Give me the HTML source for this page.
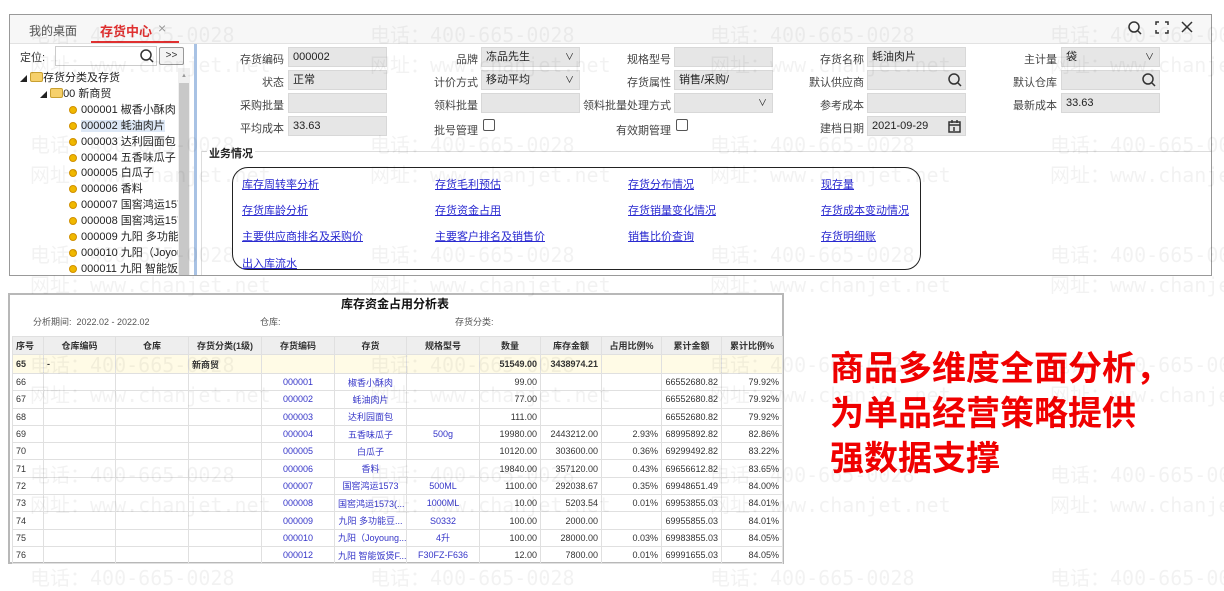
<!DOCTYPE html>
<html><head><meta charset="utf-8"><style>
*{margin:0;padding:0;box-sizing:border-box}
body{width:1224px;height:575px;background:#fff;position:relative;overflow:hidden;font-family:"Liberation Sans","Noto Sans CJK SC",sans-serif;font-size:12px;color:#333}
.a{position:absolute}
.lbl{position:absolute;text-align:right;font-size:11px;color:#444;white-space:nowrap}
.inp{position:absolute;height:20px;background:#e6e6e6;border:1px solid #d8d8d8;font-size:11px;line-height:18px;padding-left:4px;color:#222}
.lk{position:absolute;color:#2a2ad0;text-decoration:underline;font-size:11px;white-space:nowrap}
.tr{position:absolute;font-size:11px;color:#222;white-space:nowrap}
.dot{display:inline-block;width:8px;height:8px;border-radius:50%;background:#f0b800;border:1px solid #d09000;margin-right:4px;vertical-align:-1px}
table{border-collapse:collapse;font-size:9px;table-layout:fixed}
td{border:1px solid #e0e0e0;height:17.3px;padding:0 3px;white-space:nowrap;overflow:hidden;color:#333}
.b{color:#3535c8;text-align:center}
.r{text-align:right}.c{text-align:center}
.wm{position:absolute;font-family:"DejaVu Sans Mono","Noto Sans CJK SC",monospace;font-size:20px;color:rgba(0,0,0,0.05);white-space:nowrap;pointer-events:none}
.chk{position:absolute;width:12px;height:12px;border:1px solid #555;border-radius:2px;background:#fff}
</style></head><body>

<div class="a" style="left:9px;top:14px;width:1203px;height:262px;border:1px solid #999;background:#fff"></div>
<div class="a" style="left:10px;top:15px;width:1201px;height:29px;background:#f7f7f7;border-bottom:1px solid #e2e2e2"></div>
<div class="a" style="left:29px;top:22px;font-size:12px;color:#555">我的桌面</div>
<div class="a" style="left:100px;top:21px;font-size:13px;color:#e03030;font-weight:bold">存货中心</div>
<div class="a" style="left:158px;top:20px;font-size:14px;color:#999">×</div>
<div class="a" style="left:91px;top:41px;width:88px;height:2px;background:#e03030"></div>
<svg class="a" style="left:1126px;top:19px" width="80" height="18" viewBox="0 0 80 18" fill="none" stroke="#333" stroke-width="1.5">
<circle cx="8" cy="8" r="5"/><path d="M12 12l3 3"/>
<path d="M33 3h-3v3M39 3h3v3M33 14h-3v-3M39 14h3v-3"/>
<path d="M56 3l10 10M66 3L56 13"/></svg>

<div class="a" style="left:20px;top:49px;font-size:11px">定位:</div>
<div class="a" style="left:55px;top:46px;width:102px;height:20px;border:1px solid #ccc;background:#fff"></div>
<svg class="a" style="left:139px;top:48px" width="16" height="16" fill="none" stroke="#333" stroke-width="1.5"><circle cx="7" cy="7" r="5"/><path d="M11 11l3 3"/></svg>
<div class="a" style="left:159px;top:47px;width:25px;height:18px;border:1px solid #999;border-radius:2px;background:#f4f4f4;font-size:10px;text-align:center;line-height:16px">&gt;&gt;</div>
<div class="a" style="left:178px;top:68px;width:12px;height:207px;background:#f0f0f0"></div>
<div class="a" style="left:179px;top:83px;width:10px;height:192px;background:#c8c8c8"></div>
<div class="a" style="left:181px;top:73px;font-size:6px;color:#999">▲</div>
<div class="a" style="left:194px;top:44px;width:3px;height:231px;background:#a8c2e4"></div>

<div class="tr" style="left:20px;top:69px"><span style="font-size:7px">◢</span> <span style="display:inline-block;width:13px;height:10px;background:#f6d06b;border:1px solid #c9a030;border-radius:2px;vertical-align:-1px"></span>存货分类及存货</div>
<div class="tr" style="left:40px;top:85px"><span style="font-size:7px">◢</span> <span style="display:inline-block;width:13px;height:10px;background:#f6d06b;border:1px solid #c9a030;border-radius:2px;vertical-align:-1px"></span>00 新商贸</div>
<div class="tr" style="left:69px;top:101px"><span class="dot"></span>000001 椒香小酥肉</div>
<div class="tr" style="left:69px;top:117px"><span class="dot"></span><span style="background:#dde8f6">000002 蚝油肉片</span></div>
<div class="tr" style="left:69px;top:133px"><span class="dot"></span>000003 达利园面包</div>
<div class="tr" style="left:69px;top:149px"><span class="dot"></span>000004 五香味瓜子</div>
<div class="tr" style="left:69px;top:164px"><span class="dot"></span>000005 白瓜子</div>
<div class="tr" style="left:69px;top:180px"><span class="dot"></span>000006 香料</div>
<div class="tr" style="left:69px;top:196px;width:109px;overflow:hidden"><span class="dot"></span>000007 国窖鸿运1573</div>
<div class="tr" style="left:69px;top:212px;width:109px;overflow:hidden"><span class="dot"></span>000008 国窖鸿运1573</div>
<div class="tr" style="left:69px;top:228px;width:109px;overflow:hidden"><span class="dot"></span>000009 九阳 多功能豆浆</div>
<div class="tr" style="left:69px;top:244px;width:109px;overflow:hidden"><span class="dot"></span>000010 九阳（Joyoung</div>
<div class="tr" style="left:69px;top:260px;width:109px;overflow:hidden"><span class="dot"></span>000011 九阳 智能饭煲</div>

<div class="lbl" style="right:940px;top:51px">存货编码</div><div class="inp" style="left:288px;top:47px;width:99px">000002</div>
<div class="lbl" style="right:940px;top:74px">状态</div><div class="inp" style="left:288px;top:70px;width:99px">正常</div>
<div class="lbl" style="right:940px;top:97px">采购批量</div><div class="inp" style="left:288px;top:93px;width:99px"></div>
<div class="lbl" style="right:940px;top:120px">平均成本</div><div class="inp" style="left:288px;top:116px;width:99px">33.63</div>

<div class="lbl" style="right:746px;top:51px">品牌</div><div class="inp" style="left:481px;top:47px;width:99px">冻品先生<span style="position:absolute;right:5px;font-size:9px">∨</span></div>
<div class="lbl" style="right:746px;top:74px">计价方式</div><div class="inp" style="left:481px;top:70px;width:99px">移动平均<span style="position:absolute;right:5px;font-size:9px">∨</span></div>
<div class="lbl" style="right:746px;top:97px">领料批量</div><div class="inp" style="left:481px;top:93px;width:99px"></div>
<div class="lbl" style="right:746px;top:122px">批号管理</div><div class="chk" style="left:483px;top:119px"></div>

<div class="lbl" style="right:553px;top:51px">规格型号</div><div class="inp" style="left:674px;top:47px;width:99px"></div>
<div class="lbl" style="right:553px;top:74px">存货属性</div><div class="inp" style="left:674px;top:70px;width:99px">销售/采购/</div>
<div class="lbl" style="right:553px;top:97px">领料批量处理方式</div><div class="inp" style="left:674px;top:93px;width:99px"><span style="position:absolute;right:5px;font-size:9px">∨</span></div>
<div class="lbl" style="right:553px;top:122px">有效期管理</div><div class="chk" style="left:676px;top:119px"></div>

<div class="lbl" style="right:360px;top:51px">存货名称</div><div class="inp" style="left:867px;top:47px;width:99px">蚝油肉片</div>
<div class="lbl" style="right:360px;top:74px">默认供应商</div><div class="inp" style="left:867px;top:70px;width:99px"><svg style="position:absolute;right:2px;top:1px" width="16" height="16" fill="none" stroke="#333" stroke-width="1.5"><circle cx="7" cy="7" r="5"/><path d="M11 11l3 3"/></svg></div>
<div class="lbl" style="right:360px;top:97px">参考成本</div><div class="inp" style="left:867px;top:93px;width:99px"></div>
<div class="lbl" style="right:360px;top:120px">建档日期</div><div class="inp" style="left:867px;top:116px;width:99px">2021-09-29<svg style="position:absolute;right:3px;top:2px" width="14" height="14" fill="none" stroke="#333" stroke-width="1.5"><rect x="1" y="3" width="11" height="10"/><path d="M1 6h11M4 1v3M9 1v3M6 8v4"/></svg></div>

<div class="lbl" style="right:167px;top:51px">主计量</div><div class="inp" style="left:1061px;top:47px;width:99px">袋<span style="position:absolute;right:5px;font-size:9px">∨</span></div>
<div class="lbl" style="right:167px;top:74px">默认仓库</div><div class="inp" style="left:1061px;top:70px;width:99px"><svg style="position:absolute;right:2px;top:1px" width="16" height="16" fill="none" stroke="#333" stroke-width="1.5"><circle cx="7" cy="7" r="5"/><path d="M11 11l3 3"/></svg></div>
<div class="lbl" style="right:167px;top:97px">最新成本</div><div class="inp" style="left:1061px;top:93px;width:99px">33.63</div>

<div class="a" style="left:201px;top:151px;width:1010px;height:1px;background:#ddd"></div>
<div class="a" style="left:201px;top:151px;width:1px;height:124px;background:#ddd"></div>
<div class="a" style="left:207px;top:145px;background:#fff;padding:0 2px;font-size:11px;font-weight:bold;color:#222">业务情况</div>
<div class="a" style="left:232px;top:167px;width:689px;height:103px;border:1px solid #222;border-radius:16px"></div>
<div class="lk" style="left:242px;top:176px">库存周转率分析</div>
<div class="lk" style="left:435px;top:176px">存货毛利预估</div>
<div class="lk" style="left:628px;top:176px">存货分布情况</div>
<div class="lk" style="left:821px;top:176px">现存量</div>
<div class="lk" style="left:242px;top:202px">存货库龄分析</div>
<div class="lk" style="left:435px;top:202px">存货资金占用</div>
<div class="lk" style="left:628px;top:202px">存货销量变化情况</div>
<div class="lk" style="left:821px;top:202px">存货成本变动情况</div>
<div class="lk" style="left:242px;top:228px">主要供应商排名及采购价</div>
<div class="lk" style="left:435px;top:228px">主要客户排名及销售价</div>
<div class="lk" style="left:628px;top:228px">销售比价查询</div>
<div class="lk" style="left:821px;top:228px">存货明细账</div>
<div class="lk" style="left:242px;top:255px">出入库流水</div>

<div class="a" style="left:8px;top:293px;width:776px;height:271px;border:2px solid #b8b8b8;background:#fff"></div>
<div class="a" style="left:0;top:295px;width:790px;text-align:center;font-size:12px;font-weight:bold;color:#111">库存资金占用分析表</div>
<div class="a" style="left:33px;top:315px;font-size:9px;color:#555">分析期间:&nbsp; 2022.02 - 2022.02</div>
<div class="a" style="left:260px;top:315px;font-size:9px;color:#555">仓库:</div>
<div class="a" style="left:455px;top:315px;font-size:9px;color:#555">存货分类:</div>
<table class="a" style="left:12px;top:336px;width:770px">
<colgroup><col style="width:31px"><col style="width:72px"><col style="width:73px"><col style="width:73px"><col style="width:73px"><col style="width:72px"><col style="width:73px"><col style="width:61px"><col style="width:61px"><col style="width:60px"><col style="width:60px"><col style="width:61px"></colgroup>
<tr style="background:#eeeeee;font-weight:bold"><td style="height:18px">序号</td><td class="c">仓库编码</td><td class="c">仓库</td><td class="c">存货分类(1级)</td><td class="c">存货编码</td><td class="c">存货</td><td class="c">规格型号</td><td class="c">数量</td><td class="c">库存金额</td><td class="c">占用比例%</td><td class="c">累计金额</td><td class="c">累计比例%</td></tr>
<tr style="background:#fffbe6;font-weight:bold"><td style="height:19px">65</td><td>-</td><td></td><td>新商贸</td><td></td><td></td><td></td><td class="r">51549.00</td><td class="r">3438974.21</td><td></td><td></td><td></td></tr>
<tr><td>66</td><td></td><td></td><td></td><td class="b">000001</td><td class="b">椒香小酥肉</td><td></td><td class="r">99.00</td><td></td><td></td><td class="r">66552680.82</td><td class="r">79.92%</td></tr>
<tr><td>67</td><td></td><td></td><td></td><td class="b">000002</td><td class="b">蚝油肉片</td><td></td><td class="r">77.00</td><td></td><td></td><td class="r">66552680.82</td><td class="r">79.92%</td></tr>
<tr><td>68</td><td></td><td></td><td></td><td class="b">000003</td><td class="b">达利园面包</td><td></td><td class="r">111.00</td><td></td><td></td><td class="r">66552680.82</td><td class="r">79.92%</td></tr>
<tr><td>69</td><td></td><td></td><td></td><td class="b">000004</td><td class="b">五香味瓜子</td><td class="b">500g</td><td class="r">19980.00</td><td class="r">2443212.00</td><td class="r">2.93%</td><td class="r">68995892.82</td><td class="r">82.86%</td></tr>
<tr><td>70</td><td></td><td></td><td></td><td class="b">000005</td><td class="b">白瓜子</td><td></td><td class="r">10120.00</td><td class="r">303600.00</td><td class="r">0.36%</td><td class="r">69299492.82</td><td class="r">83.22%</td></tr>
<tr><td>71</td><td></td><td></td><td></td><td class="b">000006</td><td class="b">香料</td><td></td><td class="r">19840.00</td><td class="r">357120.00</td><td class="r">0.43%</td><td class="r">69656612.82</td><td class="r">83.65%</td></tr>
<tr><td>72</td><td></td><td></td><td></td><td class="b">000007</td><td class="b">国窖鸿运1573</td><td class="b">500ML</td><td class="r">1100.00</td><td class="r">292038.67</td><td class="r">0.35%</td><td class="r">69948651.49</td><td class="r">84.00%</td></tr>
<tr><td>73</td><td></td><td></td><td></td><td class="b">000008</td><td class="b">国窖鸿运1573(...</td><td class="b">1000ML</td><td class="r">10.00</td><td class="r">5203.54</td><td class="r">0.01%</td><td class="r">69953855.03</td><td class="r">84.01%</td></tr>
<tr><td>74</td><td></td><td></td><td></td><td class="b">000009</td><td class="b">九阳 多功能豆...</td><td class="b">S0332</td><td class="r">100.00</td><td class="r">2000.00</td><td></td><td class="r">69955855.03</td><td class="r">84.01%</td></tr>
<tr><td>75</td><td></td><td></td><td></td><td class="b">000010</td><td class="b">九阳（Joyoung...</td><td class="b">4升</td><td class="r">100.00</td><td class="r">28000.00</td><td class="r">0.03%</td><td class="r">69983855.03</td><td class="r">84.05%</td></tr>
<tr><td>76</td><td></td><td></td><td></td><td class="b">000012</td><td class="b">九阳 智能饭煲F...</td><td class="b">F30FZ-F636</td><td class="r">12.00</td><td class="r">7800.00</td><td class="r">0.01%</td><td class="r">69991655.03</td><td class="r">84.05%</td></tr>
</table>

<div class="a" style="left:830px;top:343px;font-size:34px;line-height:45px;font-weight:bold;color:#f00000;font-family:'Noto Sans CJK SC',sans-serif">商品多维度全面分析，<br>为单品经营策略提供<br>强数据支撑</div>

<div class="wm" style="left:30px;top:19px">电话：400-665-0028</div><div class="wm" style="left:370px;top:19px">电话：400-665-0028</div><div class="wm" style="left:710px;top:19px">电话：400-665-0028</div><div class="wm" style="left:1050px;top:19px">电话：400-665-0028</div>
<div class="wm" style="left:30px;top:49px">网址：www.chanjet.net</div><div class="wm" style="left:370px;top:49px">网址：www.chanjet.net</div><div class="wm" style="left:710px;top:49px">网址：www.chanjet.net</div><div class="wm" style="left:1050px;top:49px">网址：www.chanjet.net</div>
<div class="wm" style="left:30px;top:129px">电话：400-665-0028</div><div class="wm" style="left:370px;top:129px">电话：400-665-0028</div><div class="wm" style="left:710px;top:129px">电话：400-665-0028</div><div class="wm" style="left:1050px;top:129px">电话：400-665-0028</div>
<div class="wm" style="left:30px;top:159px">网址：www.chanjet.net</div><div class="wm" style="left:370px;top:159px">网址：www.chanjet.net</div><div class="wm" style="left:710px;top:159px">网址：www.chanjet.net</div><div class="wm" style="left:1050px;top:159px">网址：www.chanjet.net</div>
<div class="wm" style="left:30px;top:239px">电话：400-665-0028</div><div class="wm" style="left:370px;top:239px">电话：400-665-0028</div><div class="wm" style="left:710px;top:239px">电话：400-665-0028</div><div class="wm" style="left:1050px;top:239px">电话：400-665-0028</div>
<div class="wm" style="left:30px;top:269px">网址：www.chanjet.net</div><div class="wm" style="left:370px;top:269px">网址：www.chanjet.net</div><div class="wm" style="left:710px;top:269px">网址：www.chanjet.net</div><div class="wm" style="left:1050px;top:269px">网址：www.chanjet.net</div>
<div class="wm" style="left:30px;top:349px">电话：400-665-0028</div><div class="wm" style="left:370px;top:349px">电话：400-665-0028</div><div class="wm" style="left:710px;top:349px">电话：400-665-0028</div><div class="wm" style="left:1050px;top:349px">电话：400-665-0028</div>
<div class="wm" style="left:30px;top:379px">网址：www.chanjet.net</div><div class="wm" style="left:370px;top:379px">网址：www.chanjet.net</div><div class="wm" style="left:710px;top:379px">网址：www.chanjet.net</div><div class="wm" style="left:1050px;top:379px">网址：www.chanjet.net</div>
<div class="wm" style="left:30px;top:459px">电话：400-665-0028</div><div class="wm" style="left:370px;top:459px">电话：400-665-0028</div><div class="wm" style="left:710px;top:459px">电话：400-665-0028</div><div class="wm" style="left:1050px;top:459px">电话：400-665-0028</div>
<div class="wm" style="left:30px;top:489px">网址：www.chanjet.net</div><div class="wm" style="left:370px;top:489px">网址：www.chanjet.net</div><div class="wm" style="left:710px;top:489px">网址：www.chanjet.net</div><div class="wm" style="left:1050px;top:489px">网址：www.chanjet.net</div>
<div class="wm" style="left:30px;top:562px">电话：400-665-0028</div><div class="wm" style="left:370px;top:562px">电话：400-665-0028</div><div class="wm" style="left:710px;top:562px">电话：400-665-0028</div><div class="wm" style="left:1050px;top:562px">电话：400-665-0028</div>
</body></html>
